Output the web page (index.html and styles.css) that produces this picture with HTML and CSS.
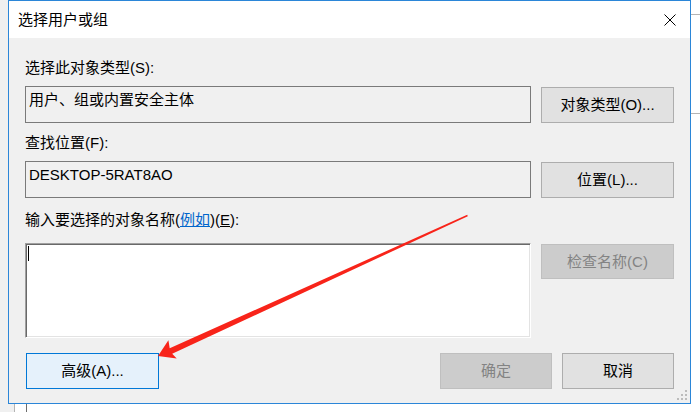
FILE: index.html
```html
<!DOCTYPE html>
<html lang="zh-CN">
<head>
<meta charset="utf-8">
<title>选择用户或组</title>
<link rel="stylesheet" href="styles.css">
</head>
<body>
<div class="screen">
  <div class="gutter"></div>
  <div class="col">
    <div class="dialog">
      <div class="titlebar">
        <span class="title">选择用户或组</span>
        <span class="close">
          <svg width="12" height="12" viewBox="0 0 12 12"><path d="M0.5 0.5 L11.5 11.5 M11.5 0.5 L0.5 11.5" stroke="#000" stroke-width="1" fill="none"/></svg>
        </span>
      </div>
      <div class="content">
        <div class="label l1">选择此对象类型(S):</div>
        <div class="row">
          <div class="field">用户、组或内置安全主体</div>
          <div class="btn btn-top">对象类型(O)...</div>
        </div>
        <div class="label l2">查找位置(F):</div>
        <div class="row">
          <div class="field">DESKTOP-5RAT8AO</div>
          <div class="btn btn-top">位置(L)...</div>
        </div>
        <div class="label l3">输入要选择的对象名称(<span class="link">例如</span>)(<u>E</u>):</div>
        <div class="row row-area">
          <div class="textarea"><span class="caret"></span></div>
          <div class="btn btn-top btn-disabled btn-check">检查名称(C)</div>
        </div>
        <div class="row row-bottom">
          <div class="btn btn-default">高级(A)...</div>
          <div class="spacer"></div>
          <div class="btn btn-small btn-disabled">确定</div>
          <div class="btn btn-small">取消</div>
        </div>
      </div>
      <svg class="grip" width="10" height="10" viewBox="0 0 10 10">
        <rect x="8" y="0" width="2" height="2" fill="#bcbcbc"/>
        <rect x="4" y="4" width="2" height="2" fill="#bcbcbc"/>
        <rect x="8" y="4" width="2" height="2" fill="#bcbcbc"/>
        <rect x="0" y="8" width="2" height="2" fill="#bcbcbc"/>
        <rect x="4" y="8" width="2" height="2" fill="#bcbcbc"/>
        <rect x="8" y="8" width="2" height="2" fill="#bcbcbc"/>
      </svg>
    </div>
    <div class="under">
      <span class="u-gray"></span>
      <span class="u-line-light"></span>
      <span class="u-white"></span>
      <span class="u-line-dark"></span>
    </div>
  </div>
  <div class="rstrip">
    <div class="rs-line rs-first"></div>
    <div class="rs-line rs-second"></div>
  </div>
</div>
<svg class="arrow" width="700" height="412" viewBox="0 0 700 412">
  <polygon fill="#f8241a" points="467.8,216.2 172.2,353.7 176.7,358.5 158,356 168.4,340.3 169.7,348.3 467.2,214.8"/>
</svg>
</body>
</html>
```
FILE: styles.css
```css
html, body {
  margin: 0;
  padding: 0;
}
body {
  width: 700px;
  height: 412px;
  overflow: hidden;
  background: #ffffff;
  font-family: "Liberation Sans", "Noto Sans CJK SC", sans-serif;
  font-size: 15px;
  color: #000;
  position: relative;
}
.screen {
  display: flex;
  width: 700px;
  height: 412px;
}
.gutter {
  width: 8px;
  flex: none;
  background: #f0f0f0;
}
.col {
  width: 683px;
  flex: none;
  display: flex;
  flex-direction: column;
}
.dialog {
  position: relative;
  box-sizing: border-box;
  width: 683px;
  height: 404px;
  border: 1px solid #2b86d8;
  background: #f0f0f0;
  display: flex;
  flex-direction: column;
}
.titlebar {
  height: 37px;
  background: #fff;
  display: flex;
  align-items: center;
  flex: none;
}
.title {
  flex: 1;
  padding-left: 9px;
  line-height: 20px;
}
.close {
  width: 40px;
  height: 37px;
  display: flex;
  align-items: center;
  justify-content: center;
}
.content {
  flex: 1;
  display: flex;
  flex-direction: column;
  padding: 20px 16px 0 16px;
}
.label {
  line-height: 20px;
  height: 20px;
  white-space: nowrap;
}
.l1 { margin-bottom: 8px; }
.l2 { margin-top: 10px; margin-bottom: 8px; }
.l3 { margin-top: 12px; margin-bottom: 13px; }
.link {
  color: #0066cc;
  text-decoration: underline;
}
.row {
  display: flex;
  gap: 10px;
  align-items: flex-start;
}
.field {
  box-sizing: border-box;
  width: 506px;
  height: 37px;
  border: 1px solid #7a7a7a;
  padding: 3px 3px 0 3px;
  line-height: 20px;
  white-space: nowrap;
}
.btn {
  box-sizing: border-box;
  width: 133px;
  height: 36px;
  border: 1px solid #adadad;
  background: #e1e1e1;
  display: flex;
  align-items: center;
  justify-content: center;
  white-space: nowrap;
  line-height: 20px;
}
.btn-top {
  margin-top: 1px;
}
.btn-check {
  height: 35px;
}
.btn-disabled {
  background: #cccccc;
  border-color: #bfbfbf;
  color: #838383;
}
.btn-default {
  background: #e5f1fb;
  border-color: #0078d7;
  margin-left: 1px;
}
.btn-small {
  width: 112px;
}
.textarea {
  box-sizing: border-box;
  width: 506px;
  height: 95px;
  background: #fff;
  border-style: solid;
  border-width: 1px;
  border-color: #a0a0a0 #ffffff #ffffff #a0a0a0;
  box-shadow: inset 1px 1px 0 #696969, inset -1px -1px 0 #e3e3e3;
  padding: 2px 0 0 2px;
}
.caret {
  display: block;
  width: 1px;
  height: 15px;
  background: #000;
}
.row-bottom {
  margin-top: 15px;
  gap: 10px;
}
.spacer {
  flex: 1;
}
.grip {
  position: absolute;
  right: 3px;
  bottom: 3px;
}
.under {
  flex: 1;
  display: flex;
}
.u-gray {
  width: 6px;
  background: #f0f0f0;
}
.u-line-light {
  width: 1px;
  background: #b4b4b4;
}
.u-white {
  width: 11px;
  background: #fff;
}
.u-line-dark {
  width: 1px;
  background: #6d6d6d;
}
.rstrip {
  flex: 1;
  background: #fff;
  display: flex;
  flex-direction: column;
}
.rs-line {
  height: 1px;
  background: #b4b4b4;
}
.rs-first { margin-top: 14px; }
.rs-second { margin-top: 98px; }
.arrow {
  position: absolute;
  left: 0;
  top: 0;
  pointer-events: none;
}
```
